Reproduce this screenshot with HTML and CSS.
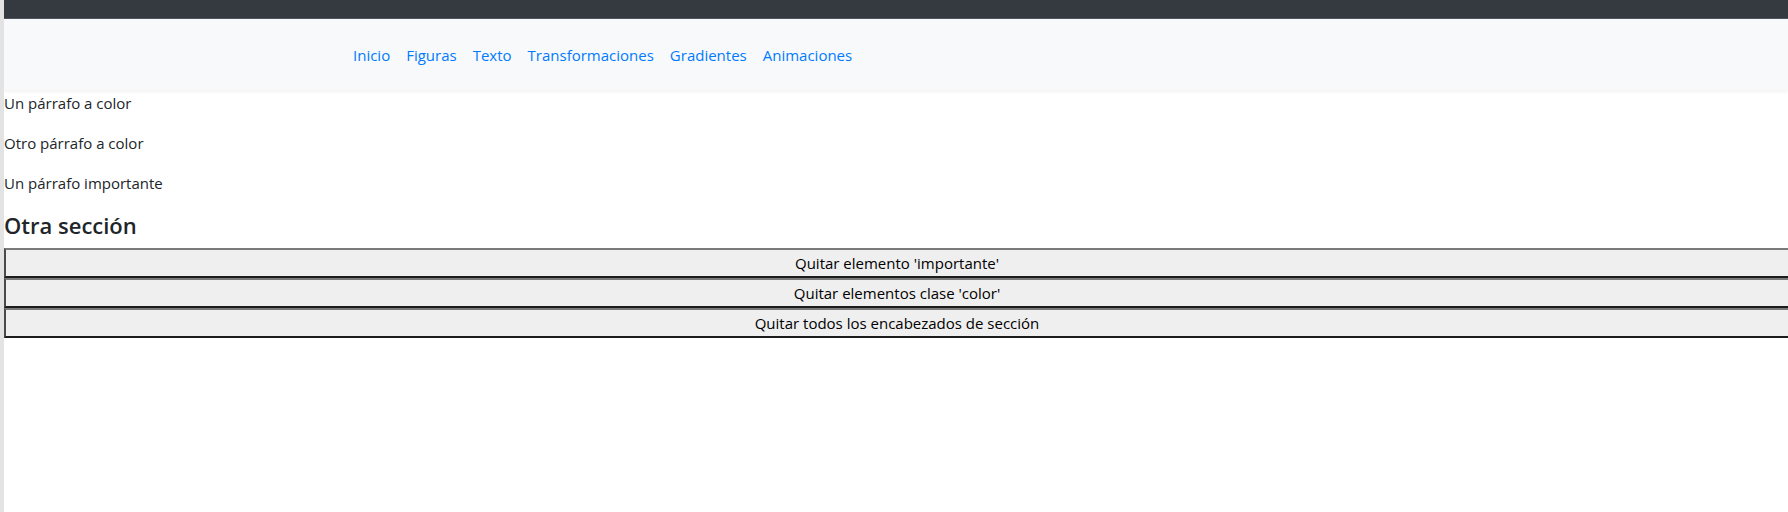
FILE: index.html
```html
<!DOCTYPE html>
<html lang="es">
<head>
<meta charset="utf-8">
<title>DOM</title>
<link rel="stylesheet" href="styles.css">
</head>
<body>
<div class="topbar"></div>
<nav class="navbar">
  <ul class="nav">
    <li><a class="nav-link" href="#">Inicio</a></li>
    <li><a class="nav-link" href="#">Figuras</a></li>
    <li><a class="nav-link" href="#">Texto</a></li>
    <li><a class="nav-link" href="#">Transformaciones</a></li>
    <li><a class="nav-link" href="#">Gradientes</a></li>
    <li><a class="nav-link" href="#">Animaciones</a></li>
  </ul>
</nav>
<main class="content">
  <p class="color">Un párrafo a color</p>
  <p class="color">Otro párrafo a color</p>
  <p class="importante">Un párrafo importante</p>
  <h4 class="seccion">Otra sección</h4>
  <button class="btn">Quitar elemento 'importante'</button>
  <button class="btn">Quitar elementos clase 'color'</button>
  <button class="btn">Quitar todos los encabezados de sección</button>
</main>
</body>
</html>
```
FILE: styles.css
```css
html, body {
  margin: 0;
  padding: 0;
}
body {
  font-family: "Open Sans", "Noto Sans", sans-serif;
  font-size: 15px;
  line-height: 24px;
  color: #212529;
  background: #fff;
  border-left: 4px solid #e3e3e3;
  min-height: 100vh;
  box-sizing: border-box;
}
.topbar {
  height: 18px;
  background: #343a40;
  border-bottom: 1px solid #4d545b;
}
.navbar {
  background: #f8f9fa;
  height: 71px;
  display: flex;
  align-items: center;
  padding-left: 341px;
  box-shadow: 0 2px 3px rgba(0, 0, 0, 0.05);
  position: relative;
}
.nav {
  list-style: none;
  margin: 0;
  padding: 0;
  display: flex;
}
.nav-link {
  display: block;
  padding: 8px;
  color: #007bff;
  text-decoration: none;
}
.content p {
  margin: 0 0 16px;
}
.content p:first-child {
  padding-top: 1px;
}
.seccion {
  font-size: 22px;
  font-weight: 600;
  line-height: 29px;
  margin: 0 0 8px;
  color: #212529;
}
.btn {
  display: block;
  width: 100%;
  height: 30px;
  margin: 0;
  padding: 0 6px;
  font-family: "Open Sans", "Noto Sans", sans-serif;
  font-size: 15px;
  color: #000;
  background: #efefef;
  border-style: solid;
  border-width: 2px 0 2px 2px;
  border-color: #7a7a7a #1c1c1c #1c1c1c #4a4a4a;
  text-align: center;
}
```
